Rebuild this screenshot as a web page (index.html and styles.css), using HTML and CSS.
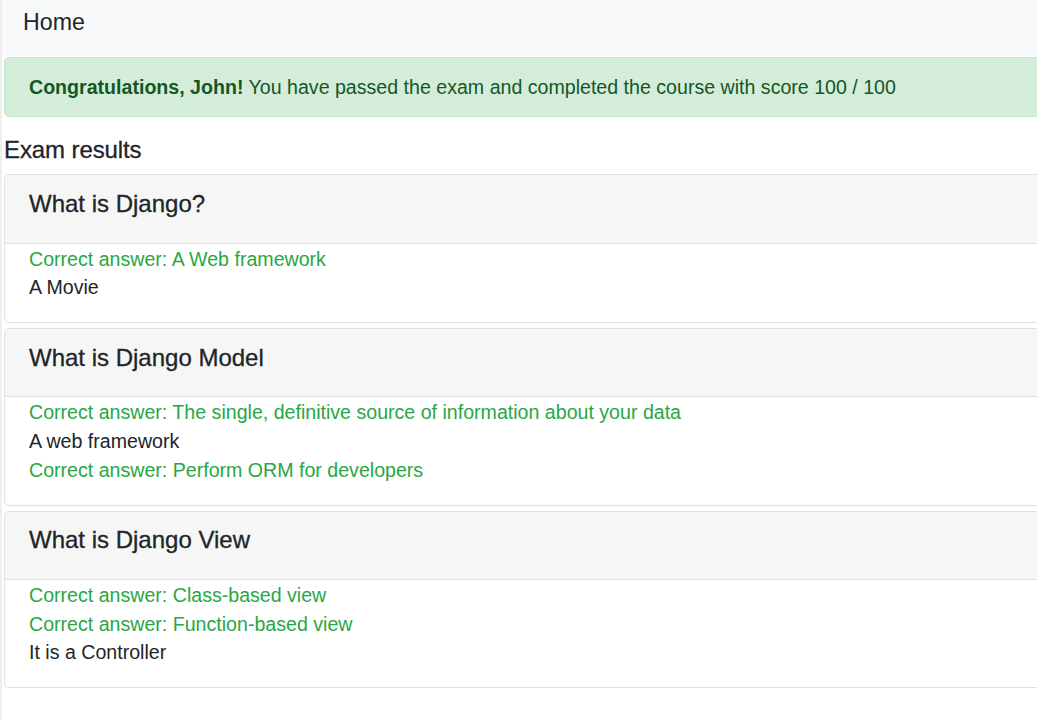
FILE: index.html
```html
<!DOCTYPE html>
<html lang="en">
<head>
<meta charset="utf-8">
<title>Exam results</title>
<link rel="stylesheet" href="styles.css">
</head>
<body>
<nav class="navbar">
  <a class="navbar-brand" href="#">Home</a>
</nav>
<main class="content">
  <div class="alert">
    <b>Congratulations, John!</b> You have passed the exam and completed the course with score 100 / 100
  </div>
  <h5 class="section-title">Exam results</h5>

  <div class="card">
    <div class="card-header"><h5 class="card-title">What is Django?</h5></div>
    <div class="card-body">
      <div class="answer correct">Correct answer: A Web framework</div>
      <div class="answer">A Movie</div>
    </div>
  </div>

  <div class="card">
    <div class="card-header"><h5 class="card-title">What is Django Model</h5></div>
    <div class="card-body">
      <div class="answer correct">Correct answer: The single, definitive source of information about your data</div>
      <div class="answer">A web framework</div>
      <div class="answer correct">Correct answer: Perform ORM for developers</div>
    </div>
  </div>

  <div class="card">
    <div class="card-header"><h5 class="card-title">What is Django View</h5></div>
    <div class="card-body">
      <div class="answer correct">Correct answer: Class-based view</div>
      <div class="answer correct">Correct answer: Function-based view</div>
      <div class="answer">It is a Controller</div>
    </div>
  </div>
</main>
</body>
</html>
```

FILE: styles.css
```css
html, body {
  margin: 0;
  padding: 0;
}
body {
  font-family: "Liberation Sans", Arial, sans-serif;
  font-size: 19.6px;
  line-height: 1.5;
  color: #212529;
  background: #fff;
  overflow-x: hidden;
  border-left: 2px solid #efefef;
  min-height: 720px;
  box-sizing: border-box;
}
.navbar {
  background: #f8f9fa;
  height: 56px;
  display: flex;
  align-items: center;
  padding: 0 21px;
  margin-left: -2px;
}
.navbar-brand {
  font-size: 23.2px;
  color: #212529;
  text-decoration: none;
  line-height: 1;
  margin-top: -10px;
  margin-left: 2px;
}
.content {
  padding: 1px 0 0 2px;
  margin-right: -30px;
}
.alert {
  background: #d4edda;
  border: 1px solid #c3e6cb;
  color: #155724;
  border-radius: 5px;
  padding: 15px 24px 13.8px;
  line-height: 28.8px;
  margin-bottom: 19px;
}
.alert b {
  font-weight: 700;
}
h5 {
  margin: 0;
  font-weight: 500;
}
.section-title {
  font-size: 24px;
  line-height: 28.8px;
  margin-bottom: 10px;
  letter-spacing: -0.1px;
  -webkit-text-stroke: 0.3px currentColor;
}
.card {
  border: 1px solid #e0e0e0;
  border-radius: 5px;
  margin-bottom: 5px;
  overflow: hidden;
}
.card-header {
  background: #f6f6f6;
  border-bottom: 1px solid #e0e0e0;
  padding: 14.4px 24px;
}
.card-title {
  font-size: 24px;
  line-height: 28.8px;
  margin-bottom: 9.6px;
  color: #212529;
  -webkit-text-stroke: 0.3px currentColor;
}
.card-body {
  padding: 1px 24px 20px;
}
.answer {
  line-height: 28.8px;
}
.answer.correct {
  color: #28a745;
}
```
